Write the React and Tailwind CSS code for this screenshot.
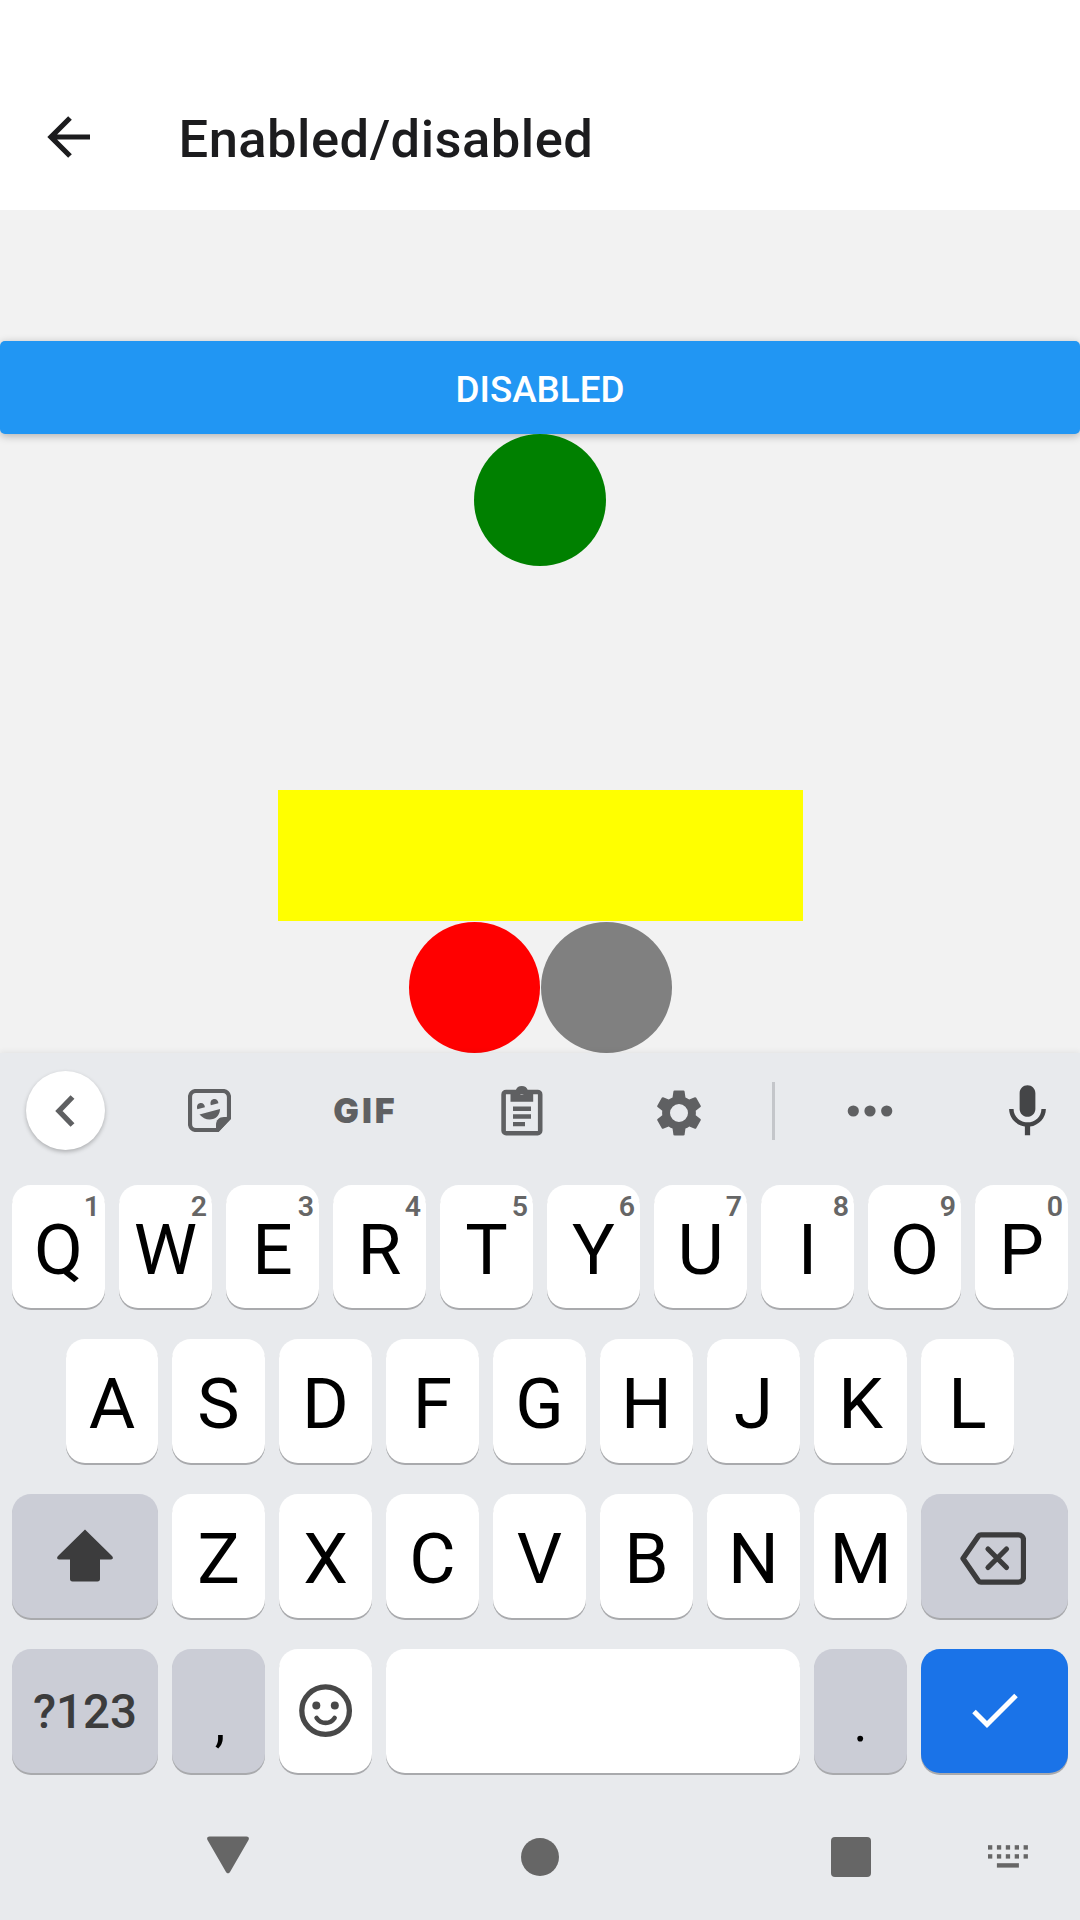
const KEY =
  "relative flex shrink-0 justify-center rounded-[19px] shadow-[0_2px_0_#a9aaad]";

function Key({ label, hint, className = "w-[93px]" }) {
  return (
    <div className={`${KEY} bg-white ${className}`}>
      <span className="pt-[2px] text-[71.3px] leading-[125px] text-black">{label}</span>
      {hint && (
        <span className="absolute top-[6px] right-[5px] text-[28.5px] font-semibold leading-[32px] text-[#666]">
          {hint}
        </span>
      )}
    </div>
  );
}

function GrayKey({ children, className }) {
  return <div className={`${KEY} bg-[#cbcdd6] ${className}`}>{children}</div>;
}

function Header() {
  return (
    <header className="flex h-[210px] items-center bg-white pt-[64px]">
      <svg className="-mt-px ml-[47px] h-[42px] w-[43px]" viewBox="0 0 43 42" fill="none" stroke="#1c1c1e" strokeWidth="5.2">
        <path d="M43 21H4M23 2L4 21l19 19" />
      </svg>
      <h1 className="ml-[88.5px] pt-[3px] text-[52.5px] font-medium leading-[60px] tracking-[0.48px] text-[#1c1c1e]">
        Enabled/disabled
      </h1>
    </header>
  );
}

function Toolbar() {
  return (
    <div className="flex h-[116px] items-center text-[#5f6062]">
      <div className="flex w-[131px] justify-center">
        <div className="-mt-px flex size-[79px] items-center justify-center rounded-full bg-white shadow-[0_2px_4px_rgba(0,0,0,0.25)]">
          <svg className="-ml-[2px]" width="20" height="32" viewBox="0 0 20 32" fill="none" stroke="currentColor" strokeWidth="5.4">
            <path d="M17.5 2L4 16l13.5 14" />
          </svg>
        </div>
      </div>
      <div className="flex w-[157px] justify-center">
        <svg className="-mt-px" width="43" height="43" viewBox="0 0 43 43" fill="currentColor">
          <path d="M41 28.5V8a6 6 0 0 0-6-6H8a6 6 0 0 0-6 6v27a6 6 0 0 0 6 6h21.500z" fill="none" stroke="currentColor" strokeWidth="4.2" />
          <path d="M28 42v-6c0-5 3-8 8-8h7v2L30.500 43z" />
          <path d="M11.500 25.500L32 20c0 5-3 9-7 10-5 1.500-10-.5-13.500-4.500z" />
          <path d="M9.300 20.200C8 16 10.500 14 13 14c2.200 0 3.700 1.800 3.900 4.200z" />
          <path d="M22.800 16.200C21.500 12 24 10 26.500 10c2.200 0 3.700 1.800 3.900 4.200z" />
        </svg>
      </div>
      <div className="flex w-[152px] justify-center pl-[3px] font-['Inter',sans-serif] text-[34px] font-black leading-[34px] tracking-[3px]">
        GIF
      </div>
      <div className="flex w-[164px] justify-center">
        <svg className="-mt-[2px]" width="42" height="51" viewBox="0 0 42 51" fill="currentColor">
          <rect x="2.600" y="7" width="36.600" height="41.200" rx="2.500" fill="none" stroke="currentColor" strokeWidth="4.600" />
          <path fillRule="evenodd" d="M9.500 5.500h5.200a6.400 6.400 0 0 1 12.200 0h5.300v11.300H9.500zM20.800 5.200a2.300 2.300 0 1 0 0 4.600 2.300 2.300 0 0 0 0-4.600z" />
          <path d="M12 21.500h18v4.600H12zM12 29.300h18v4.400H12zM12 36.900h12v4.400H12z" />
        </svg>
      </div>
      <div className="flex w-[150px] justify-center">
        <svg className="mt-[3px]" width="54" height="54" viewBox="0 0 24 24" fill="currentColor">
          <path d="M19.430 12.980c.04-.32.07-.64.07-.98s-.03-.66-.07-.98l2.110-1.650c.19-.15.24-.42.12-.64l-2-3.460c-.12-.22-.39-.3-.61-.22l-2.490 1c-.52-.4-1.080-.73-1.690-.98l-.38-2.650C14.460 2.180 14.250 2 14 2h-4c-.25 0-.46.18-.49.42l-.38 2.650c-.61.25-1.170.59-1.690.98l-2.490-1c-.23-.09-.49 0-.61.22l-2 3.460c-.13.22-.07.49.12.64l2.110 1.650c-.04.32-.07.65-.07.98s.03.66.07.98l-2.110 1.650c-.19.15-.24.42-.12.64l2 3.460c.12.22.39.3.61.22l2.490-1c.52.4 1.080.73 1.690.98l.38 2.650c.03.24.24.42.49.42h4c.25 0 .46-.18.49-.42l.38-2.650c.61-.25 1.170-.59 1.690-.98l2.490 1c.23.09.49 0 .61-.22l2-3.460c.12-.22.07-.49-.12-.64l-2.110-1.650zM12 16a4 4 0 1 1 0-8 4 4 0 0 1 0 8z" />
        </svg>
      </div>
      <div className="flex w-[39px] justify-center">
        <div className="h-[58px] w-[3px] bg-[#c4c6ca]" />
      </div>
      <div className="flex w-[154px] justify-center">
        <svg width="46" height="12" viewBox="0 0 46 12" fill="currentColor">
          <circle cx="6.300" cy="6" r="5.600" />
          <circle cx="23" cy="6" r="5.600" />
          <circle cx="39.700" cy="6" r="5.600" />
        </svg>
      </div>
      <div className="ml-auto flex w-[105px] justify-center text-[#444547]">
        <svg width="63" height="63" viewBox="0 0 24 24" fill="currentColor">
          <path d="M12 14c1.660 0 3-1.340 3-3V5c0-1.660-1.340-3-3-3S9 3.340 9 5v6c0 1.660 1.340 3 3 3zm5.300-3c0 3-2.540 5.100-5.300 5.100S6.700 14 6.700 11H5c0 3.410 2.720 6.230 6 6.720V21h2v-3.280c3.280-.48 6-3.300 6-6.720h-1.700z" />
        </svg>
      </div>
    </div>
  );
}

function Keyboard() {
  return (
    <section className="relative flex h-[867px] flex-col bg-[#e8eaed] shadow-[0_-1px_6px_rgba(0,0,0,0.07)]">
      <Toolbar />
      <div className="mt-[16px] flex flex-col gap-[31px]">
        <div className="flex h-[123px] gap-[14px] px-[12px]">
          {"QWERTYUIOP".split("").map((c, i) => (
            <Key key={c} label={c} hint={String((i + 1) % 10)} />
          ))}
        </div>
        <div className="flex h-[124px] gap-[14px] px-[66px]">
          {"ASDFGHJKL".split("").map((c) => (
            <Key key={c} label={c} className={c === "A" ? "w-[92px]" : "w-[93px]"} />
          ))}
        </div>
        <div className="flex h-[124px] gap-[14px] px-[12px]">
          <GrayKey className="w-[146px] items-center">
            <svg className="-mt-[1px]" width="56" height="53" viewBox="0 0 56 53" fill="#3c3c3d">
              <path d="M28 .5l27 26.500c1.500 1.500 1 3.500-1 3.500H43V50c0 1.500-.8 2.500-2.500 2.500h-25C13.800 52.500 13 51.500 13 50V30.500H2c-2 0-2.500-2-1-3.500z" />
            </svg>
          </GrayKey>
          {"ZXCVBNM".split("").map((c) => (
            <Key key={c} label={c} />
          ))}
          <GrayKey className="w-[147px] items-center">
            <svg className="mt-[5px] mr-[3px]" width="66" height="53" viewBox="0 0 66 53" fill="none" stroke="#3c3c3d" strokeLinejoin="round">
              <path d="M21 2.800h37.500a5 5 0 0 1 5 5v37.400a5 5 0 0 1-5 5H21a3 3 0 0 1-2.500-1.300L3 26.500 18.500 4.100A3 3 0 0 1 21 2.800z" strokeWidth="5.300" />
              <path d="M28 17l18.500 18.500M46.500 17L28 35.500" strokeWidth="5.200" strokeLinecap="round" />
            </svg>
          </GrayKey>
        </div>
        <div className="flex h-[124px] gap-[14px] px-[12px]">
          <GrayKey className="w-[146px]">
            <span className="text-[47.500px] font-medium leading-[126px] text-[#3c3c3d]">?123</span>
          </GrayKey>
          <GrayKey className="w-[93px]">
            <span className="pt-[12px] pl-[3px] text-[53px] leading-[124px] text-black">,</span>
          </GrayKey>
          <div className={`${KEY} w-[93px] items-center bg-white`}>
            <svg width="54" height="54" viewBox="0 0 54 54" fill="none" stroke="#484848">
              <circle cx="26.600" cy="26.600" r="23.800" strokeWidth="5.300" />
              <path d="M17.600 34c4.500 6.500 13.500 6.500 18 0" strokeWidth="4.600" strokeLinecap="round" />
              <circle cx="17.300" cy="21.600" r="4" fill="#484848" stroke="none" />
              <circle cx="35.800" cy="21.600" r="4" fill="#484848" stroke="none" />
            </svg>
          </div>
          <div className={`${KEY} w-[414px] bg-white`} />
          <GrayKey className="w-[93px]">
            <span className="pt-[12px] text-[53px] leading-[124px] text-black">.</span>
          </GrayKey>
          <div className={`${KEY} w-[147px] items-center bg-[#1a73e8]`}>
            <svg width="46" height="36" viewBox="0 0 46 36" fill="none" stroke="white" strokeWidth="5">
              <path d="M2 18.500l13 13L44 2.500" />
            </svg>
          </div>
        </div>
      </div>
      <SystemNav />
    </section>
  );
}

function SystemNav() {
  return (
    <nav className="flex flex-1 items-center pt-[20px] text-[#666]">
      <svg className="-mt-[4px] ml-[207px]" width="42" height="38" viewBox="0 0 42 38" fill="currentColor">
        <path d="M2.500.5h37c2 0 3 1.700 2 3.500L23 36c-1 1.800-3 1.800-4 0L.5 4C-.5 2.200.5.5 2.500.5z" />
      </svg>
      <div className="ml-[272px] size-[38px] rounded-full bg-current" />
      <div className="ml-[272px] size-[40px] rounded-[4px] bg-current" />
      <svg className="ml-[117px]" width="40" height="23" viewBox="0 0 40 23" fill="currentColor">
        {[0, 1, 2, 3, 4].map((i) => (
          <g key={i}>
            <rect x={8.9 * i} y="0.2" width="4.3" height="4.4" />
            <rect x={8.9 * i} y="9.2" width="4.3" height="4.4" />
          </g>
        ))}
        <rect x="8.9" y="18.2" width="22" height="4.4" />
      </svg>
    </nav>
  );
}

export default function App() {
  return (
    <div className="flex h-[1920px] w-[1080px] flex-col overflow-hidden bg-[#f2f2f2] font-['Roboto',sans-serif]">
      <Header />
      <main className="flex h-[843px] flex-col items-center pt-[131px]">
        <button className="h-[93px] w-full shrink-0 rounded-[5px] bg-[#2196f3] pt-[4px] text-[36.750px] font-medium text-white shadow-[0_2px_8px_rgba(0,0,0,0.28)]">
          DISABLED
        </button>
        <div className="relative size-[132px] shrink-0 rounded-full bg-[#008000]" />
        <div className="mt-[224px] ml-px h-[131px] w-[525px] shrink-0 bg-[#ffff00]" />
        <div className="mt-px flex shrink-0 gap-px">
          <div className="size-[131px] rounded-full bg-[#ff0000]" />
          <div className="size-[131px] rounded-full bg-[#808080]" />
        </div>
      </main>
      <Keyboard />
    </div>
  );
}
